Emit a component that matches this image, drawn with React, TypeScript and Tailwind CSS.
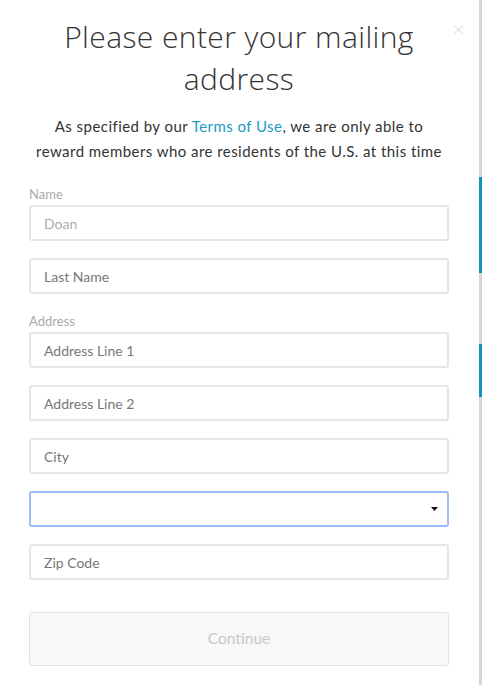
import { FC } from 'react'

const font = { fontFamily: '"Lato", "Open Sans", sans-serif' }
const headFont = { fontFamily: '"Open Sans", "Lato", sans-serif' }

const Field: FC<{ placeholder: string; light?: boolean; className?: string }> = ({ placeholder, light, className }) => (
  <div
    className={`flex h-[36px] items-center rounded-[3px] border-2 border-[#e6e6e6] bg-white px-[13px] text-[14px] ${
      light ? 'text-[#ababab]' : 'text-[#777]'
    } ${className ?? ''}`}
  >
    {placeholder}
  </div>
)

export default function App() {
  return (
    <div className="flex h-[685px] w-[482px] overflow-hidden bg-white" style={font}>
      {/* Modal */}
      <div className="relative w-[479px] shrink-0 bg-white pl-[29px] pr-[30px] pt-[16px]">
        <button className="absolute right-[14px] top-[18px] text-[22px] leading-none font-light text-[#dcdcdc]">×</button>

        <h1 className="text-center text-[30px] leading-[42px] font-light tracking-[0.4px] text-[#333]" style={headFont}>
          Please enter your mailing
          <br />
          address
        </h1>
        <p className="mt-[14px] text-center text-[15px] leading-[25px] tracking-[0.45px] text-[#333]">
          As specified by our <span className="text-[#1a9bc4]">Terms of Use</span>, we are only able to
          <br />
          reward members who are residents of the U.S. at this time
        </p>

        <div className="mt-[21px] text-[13px] leading-[18px] text-[#aaa]">Name</div>
        <Field placeholder="Doan" light className="mt-[2px]" />
        <Field placeholder="Last Name" className="mt-[17px]" />

        <div className="mt-[18px] text-[13px] leading-[18px] text-[#aaa]">Address</div>
        <Field placeholder="Address Line 1" className="mt-[2px]" />
        <Field placeholder="Address Line 2" className="mt-[17px]" />
        <Field placeholder="City" className="mt-[17px]" />

        <div className="mt-[17px] flex h-[36px] items-center justify-end rounded-[3px] border-2 border-[#9dbdf5] bg-white pr-[9px]">
          <svg width="7" height="4" viewBox="0 0 7 4">
            <path d="M0 0h7L3.5 4z" fill="#111" />
          </svg>
        </div>

        <Field placeholder="Zip Code" className="mt-[17px]" />

        <button className="mt-[32px] flex h-[54px] w-full items-center justify-center rounded-[3px] border border-[#e3e3e3] bg-[#f8f8f8] text-[15.5px] text-[#c8c8c8]">
          Continue
        </button>
      </div>

      {/* Page behind the modal */}
      <div className="flex w-[3px] flex-col bg-[#d6d6d6]">
        <div className="mt-[177px] h-[96px] bg-[#1193c0]" />
        <div className="mt-[71px] h-[53px] bg-[#1193c0]" />
      </div>
    </div>
  )
}
